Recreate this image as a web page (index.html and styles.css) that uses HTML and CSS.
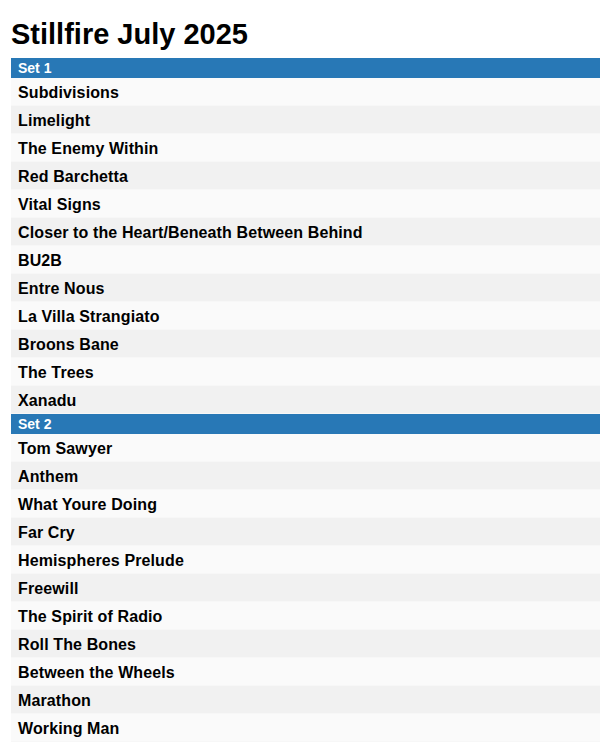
FILE: index.html
```html
<!DOCTYPE html>
<html lang="en">
<head>
  <meta charset="UTF-8">
  <title>Stillfire July 2025</title>
  <link rel="stylesheet" href="styles.css">
</head>
<body>
  <div class="page">
    <h1>Stillfire July 2025</h1>

    <div class="setlist">
      <div class="set-header">Set 1</div>
      <div class="song">Subdivisions</div>
      <div class="song">Limelight</div>
      <div class="song">The Enemy Within</div>
      <div class="song">Red Barchetta</div>
      <div class="song">Vital Signs</div>
      <div class="song">Closer to the Heart/Beneath Between Behind</div>
      <div class="song">BU2B</div>
      <div class="song">Entre Nous</div>
      <div class="song">La Villa Strangiato</div>
      <div class="song">Broons Bane</div>
      <div class="song">The Trees</div>
      <div class="song">Xanadu</div>
    </div>

    <div class="setlist">
      <div class="set-header">Set 2</div>
      <div class="song">Tom Sawyer</div>
      <div class="song">Anthem</div>
      <div class="song">What Youre Doing</div>
      <div class="song">Far Cry</div>
      <div class="song">Hemispheres Prelude</div>
      <div class="song">Freewill</div>
      <div class="song">The Spirit of Radio</div>
      <div class="song">Roll The Bones</div>
      <div class="song">Between the Wheels</div>
      <div class="song">Marathon</div>
      <div class="song">Working Man</div>
    </div>
  </div>
</body>
</html>
```

FILE: styles.css
```css
body {
  margin: 0;
  font-family: "Liberation Sans", Arial, sans-serif;
  color: #000;
  background: #fff;
}
.page {
  padding: 18px 0 0 11px;
}
h1 {
  margin: 0 0 8px 0;
  font-size: 29px;
  line-height: 32px;
  font-weight: bold;
}
.set-header {
  background-color: #2878b6;
  color: white;
  font-size: 14px;
  font-weight: bold;
  line-height: 20px;
  height: 20px;
  padding-left: 7px;
}
.song {
  height: 26px;
  padding: 1px 0 0 7px;
  line-height: 28px;
  font-size: 16px;
  font-weight: bold;
  letter-spacing: 0.12px;
  background-color: #fafafa;
  border-bottom: 1px solid #f7f7f7;
}
.song:nth-child(odd) {
  background-color: #f1f1f1;
}
```
